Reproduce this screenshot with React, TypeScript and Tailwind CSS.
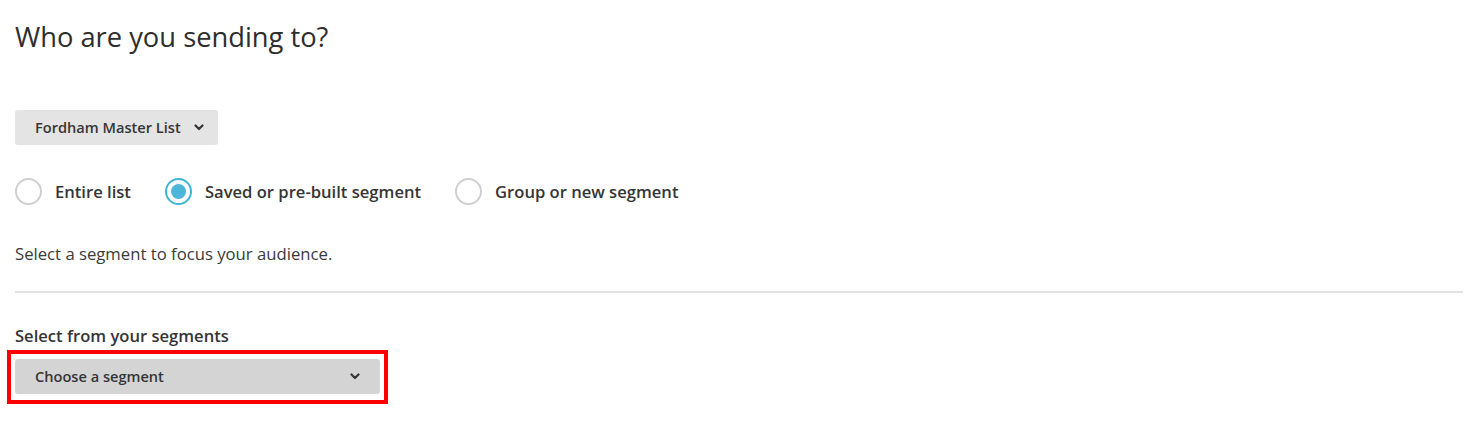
import { useState } from "react";

function Chevron({ className = "" }: { className?: string }) {
  return (
    <svg
      viewBox="0 0 10 7"
      className={className}
      fill="none"
      stroke="currentColor"
      strokeWidth="2.2"
      strokeLinecap="round"
      strokeLinejoin="round"
    >
      <path d="M1.5 1.5 L5 5 L8.5 1.5" />
    </svg>
  );
}

function Radio({
  label,
  checked,
  onClick,
}: {
  label: string;
  checked: boolean;
  onClick: () => void;
}) {
  return (
    <button type="button" onClick={onClick} className="flex items-center gap-[13px]">
      <span
        className={`flex h-[27px] w-[27px] items-center justify-center rounded-full border-2 ${
          checked ? "border-[#3db4d8]" : "border-[#cfcfcf]"
        }`}
      >
        {checked && <span className="h-[15px] w-[15px] rounded-full bg-[#4bb6d8]" />}
      </span>
      <span className="text-[16.6px] font-semibold leading-6 text-[#353535]">{label}</span>
    </button>
  );
}

export default function App() {
  // which audience option is selected
  const [mode, setMode] = useState("saved");

  const options = [
    { id: "entire", label: "Entire list" },
    { id: "saved", label: "Saved or pre-built segment" },
    { id: "group", label: "Group or new segment" },
  ];

  return (
    <div className="min-h-screen bg-white pl-[15px] pr-[17px] pt-[19px] font-['Open_Sans',sans-serif] text-[#333]">
      <h1 className="text-[27.3px] font-normal leading-[36px] text-[#2e2e2e]">Who are you sending to?</h1>

      <button
        type="button"
        className="mt-[55px] flex h-[35px] items-center rounded-[3px] bg-[#e4e4e4] pl-5 pr-[14px] text-[14.6px] font-semibold text-[#353535]"
      >
        Fordham Master List
        <Chevron className="ml-[13px] h-[7px] w-[10px]" />
      </button>

      <div className="mt-[33px] flex items-center gap-[34px]">
        {options.map((o) => (
          <Radio
            key={o.id}
            label={o.label}
            checked={mode === o.id}
            onClick={() => setMode(o.id)}
          />
        ))}
      </div>

      <p className="mt-[37px] text-[16.7px] leading-6 text-[#3a3a3a]">
        Select a segment to focus your audience.
      </p>

      <hr className="mt-[25px] border-t-2 border-[#e2e2e2]" />

      <div className="mt-[31px] text-[16.6px] font-semibold leading-6 text-[#353535]">
        Select from your segments
      </div>

      <div className="relative mt-[11px] w-[365px]">
        <button
          type="button"
          className="flex h-[35px] w-full items-center justify-between rounded-[3px] bg-[#d4d4d4] pl-5 pr-[20px] text-[14.6px] font-semibold text-[#353535]"
        >
          Choose a segment
          <Chevron className="h-[7px] w-[10px]" />
        </button>
        {/* annotation box */}
        <div className="pointer-events-none absolute -bottom-[10px] -left-[8px] -right-[8px] -top-[9px] border-4 border-[#f00]" />
      </div>
    </div>
  );
}
